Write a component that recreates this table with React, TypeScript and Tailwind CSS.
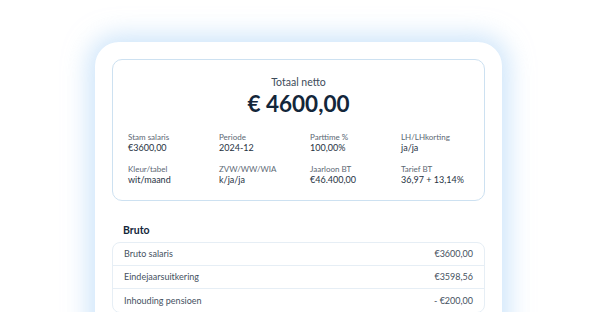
const stats = [
  { label: 'Stam salaris', value: '€3600,00' },
  { label: 'Periode', value: '2024-12' },
  { label: 'Parttime %', value: '100,00%' },
  { label: 'LH/LHkorting', value: 'ja/ja' },
  { label: 'Kleur/tabel', value: 'wit/maand' },
  { label: 'ZVW/WW/WIA', value: 'k/ja/ja' },
  { label: 'Jaarloon BT', value: '€46.400,00' },
  { label: 'Tarief BT', value: '36,97 + 13,14%' },
]

const bruto = [
  { label: 'Bruto salaris', value: '€3600,00' },
  { label: 'Eindejaarsuitkering', value: '€3598,56' },
  { label: 'Inhouding pensioen', value: '- €200,00' },
]

export default function App() {
  return (
    <div className="w-[600px] h-[312px] overflow-hidden bg-white pt-[42px] pl-[95px] font-['Lato',sans-serif]">
      <div className="w-[407px] rounded-[24px] bg-white shadow-[0_0_24px_7px_rgba(165,208,245,0.55)] px-[17px] pt-[17px] pb-10">
        {/* Summary */}
        <div className="rounded-[10px] border border-[#cde1f1] pt-[15px] pb-[14px]">
          <p className="text-center text-[10.5px] leading-[14px] text-[#3d4b5a]">Totaal netto</p>
          <p className="text-center text-[22.5px] leading-[28px] font-bold text-[#13263a] mt-[1px]">€ 4600,00</p>
          <div className="grid grid-cols-[91px_91px_91px_1fr] gap-y-[10px] pl-[15px] mt-[14px]">
            {stats.map(s => (
              <div key={s.label}>
                <p className="text-[8px] leading-[10px] text-[#5c6874]">{s.label}</p>
                <p className="text-[9px] leading-[12px] text-[#26323f]">{s.value}</p>
              </div>
            ))}
          </div>
        </div>

        {/* Bruto */}
        <h2 className="text-[10.5px] leading-[14px] font-bold text-[#13263a] pl-[11px] mt-[22px] mb-[5px]">Bruto</h2>
        <div className="rounded-[8px] border border-[#e6eef5] divide-y divide-[#e6eef5]">
          {bruto.map(r => (
            <div key={r.label} className="flex items-center justify-between h-[23px] px-[11px] text-[9px] text-[#46525f]">
              <span>{r.label}</span>
              <span>{r.value}</span>
            </div>
          ))}
        </div>
      </div>
    </div>
  )
}
